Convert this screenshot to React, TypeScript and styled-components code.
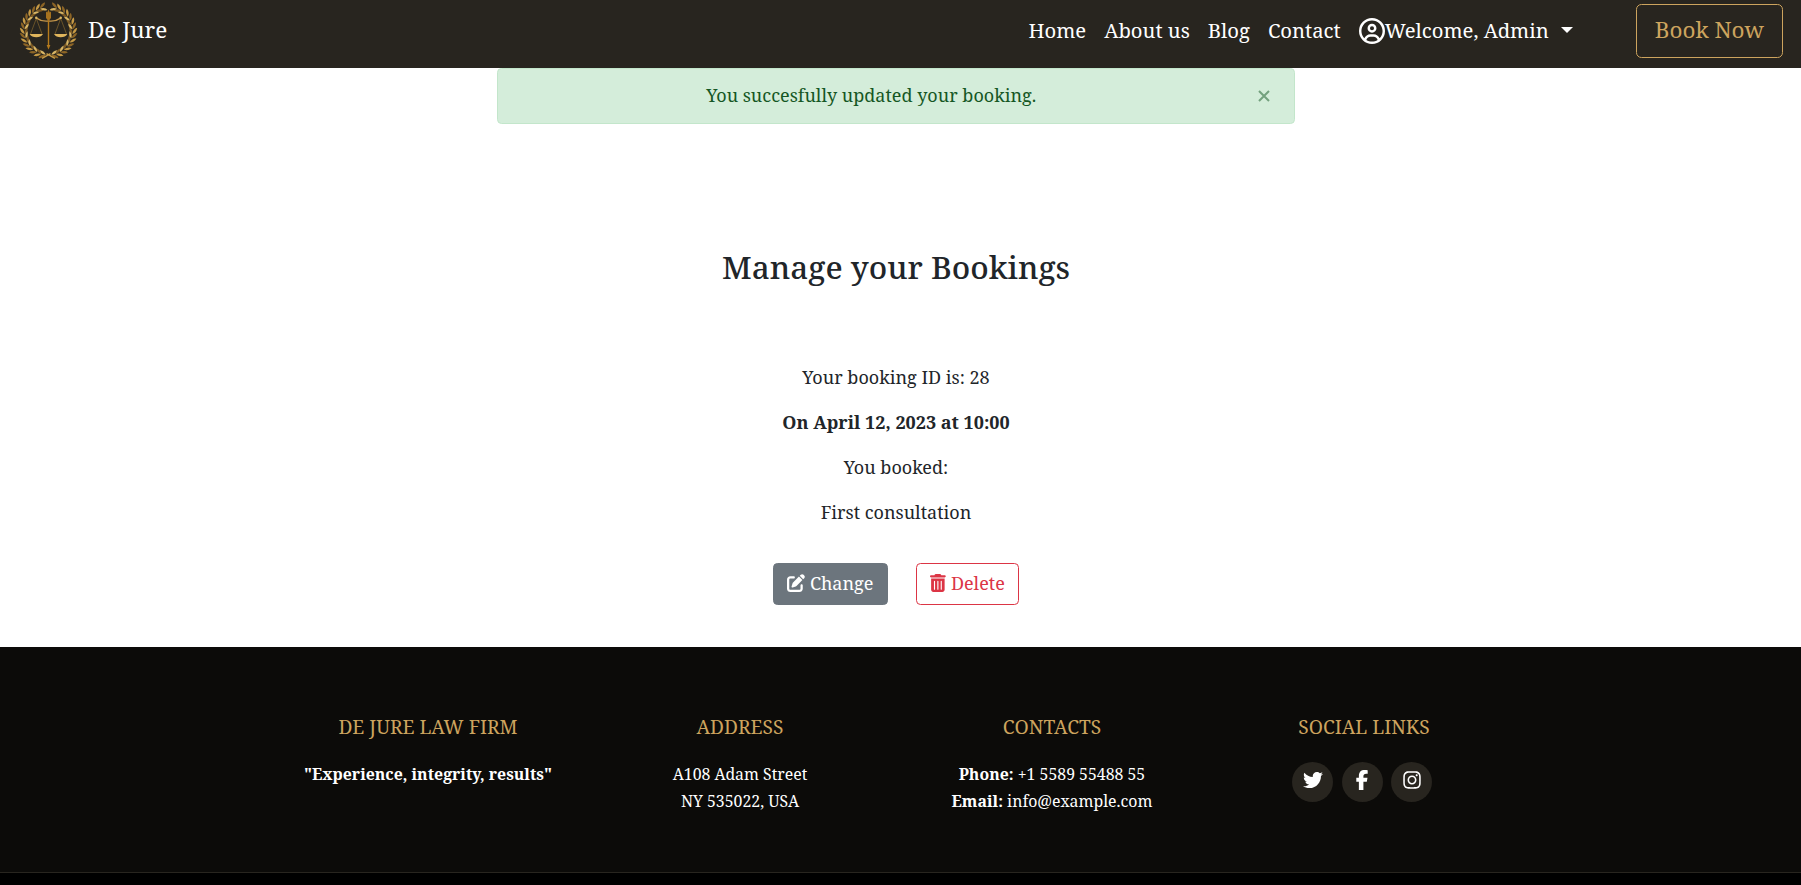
import React from "react";
import styled, { createGlobalStyle } from "styled-components";
import {
  FaPenToSquare,
  FaTrashCan,
  FaRegCircleUser,
  FaTwitter,
  FaFacebookF,
  FaInstagram,
} from "react-icons/fa6";

const GlobalStyle = createGlobalStyle`
  *, *::before, *::after { box-sizing: border-box; }
  html { font-size: 18px; }
  body {
    margin: 0;
    background: #fff;
    color: #212529;
    font-family: "Noto Serif", "Liberation Serif", serif;
    line-height: 1.5;
    overflow: hidden;
  }
`;

const Page = styled.div`
  display: flex;
  flex-direction: column;
  height: 885px;
  overflow: hidden;
`;

const Navbar = styled.header`
  flex: none;
  display: flex;
  align-items: flex-start;
  justify-content: space-between;
  height: 68px;
  padding: 0 1rem;
  background: #28251f;
`;

const Brand = styled.a`
  display: flex;
  align-items: flex-start;
  gap: 10px;
  padding-top: 1px;
  color: #fff;
  font-size: 1.25rem;
  line-height: 58px;
  text-decoration: none;
`;

const LogoMark = styled.svg`
  display: block;
  width: 60px;
  height: 60px;
`;

const Menu = styled.nav`
  display: flex;
  align-items: flex-start;
  padding-top: 4px;
`;

const MenuLink = styled.a`
  display: flex;
  align-items: center;
  height: 51px;
  padding: 0 0.5rem;
  color: #fff;
  font-size: 20.25px;
  line-height: 30px;
  white-space: pre;
  text-decoration: none;

  svg {
    width: 26px;
    height: 26px;
    margin-top: 2px;
  }
`;

const Caret = styled.span`
  margin-left: 12px;
  margin-top: 1px;
  border-top: 6px solid;
  border-left: 6px solid transparent;
  border-right: 6px solid transparent;
`;

const BookButton = styled.button`
  height: 54px;
  margin-left: 54px;
  padding: 0 1rem 2px;
  border: 1px solid #cda45e;
  border-radius: 5.4px;
  background: transparent;
  color: #cda45e;
  font: inherit;
  font-size: 1.25rem;
`;

const Main = styled.main`
  flex: none;
  display: flex;
  flex-direction: column;
  align-items: center;
  height: 579px;
  padding-right: 9px;
`;

const Alert = styled.div`
  display: flex;
  align-items: center;
  width: 798px;
  height: 56px;
  padding-left: 1.25rem;
  border: 1px solid #c3e6cb;
  border-radius: 4.5px;
  background: #d4edda;
  color: #155724;
`;

const AlertText = styled.span`
  flex: 1;
  margin-top: -1px;
  text-align: center;
`;

const CloseButton = styled.button`
  width: 72px;
  padding: 0;
  border: 0;
  background: none;
  color: inherit;
  opacity: 0.5;

  svg {
    display: block;
    width: 12px;
    height: 12px;
    margin-left: 36px;
  }
`;

const Title = styled.h3`
  margin: 124px 0 78px;
  font-size: 1.75rem;
  font-weight: 500;
  line-height: 38px;
`;

const Detail = styled.p<{ $strong?: boolean }>`
  margin: 0 0 1rem;
  font-weight: ${(p) => (p.$strong ? 700 : 400)};
`;

const Actions = styled.div`
  display: flex;
  gap: 28px;
  margin-top: 19px;
`;

const ActionButton = styled.button<{ $color: string; $filled?: boolean }>`
  display: flex;
  align-items: center;
  gap: 4.7px;
  height: 42px;
  padding: 0 0.75rem;
  border: 1px solid ${(p) => p.$color};
  border-radius: 4.5px;
  background: ${(p) => (p.$filled ? p.$color : "transparent")};
  color: ${(p) => (p.$filled ? "#fff" : p.$color)};
  font: inherit;

  svg {
    width: ${(p) => (p.$filled ? "18px" : "15.75px")};
    height: 18px;
    margin-top: -3px;
  }
  span {
    margin-top: -2px;
  }
`;

const Footer = styled.footer`
  flex: 1;
  background: #000;
  color: #fff;
  font-size: 15.85px;
  line-height: 27px;
`;

const FooterTop = styled.div`
  display: grid;
  grid-template-columns: repeat(4, 312px);
  justify-content: center;
  height: 226px;
  padding: 68px 9px 0 0;
  border-bottom: 1px solid #28251f;
  background: #0c0b09;
  text-align: center;
`;

const FooterTitle = styled.h4`
  margin: 0 0 23px;
  color: #cda45e;
  font-size: 19.2px;
  font-weight: 400;
  line-height: 23px;
  text-transform: uppercase;
`;

const FooterLine = styled.div``;

const Socials = styled.div`
  display: flex;
  justify-content: center;
  gap: 8.5px;
  margin-top: 24px;
  padding-right: 4px;
`;

const SocialLink = styled.a`
  display: flex;
  justify-content: center;
  width: 41px;
  height: 40px;
  padding-top: 8px;
  border-radius: 50%;
  background: #28251f;
  color: #fff;

  svg {
    width: 20px;
    height: 20px;
  }
`;

const LEAVES = Array.from({ length: 15 }, (_, i) => i);

function Branch() {
  return (
    <g>
      {LEAVES.map((i) => {
        const deg = 98 + i * 10.9;
        const rad = (deg * Math.PI) / 180;
        const x = 48.5 + 24 * Math.cos(rad);
        const y = 31 + 24 * Math.sin(rad);
        return (
          <g key={i} transform={`translate(${x} ${y}) rotate(${deg + 90})`}>
            <path d="M-0.5 0 Q1 -4 6.2 -4.2 Q5 -0.4 -0.5 0Z" fill={i % 2 ? "#c69a45" : "#8d6526"} />
            <path d="M-0.5 0 Q1 3.8 6 3.8 Q5 0.4 -0.5 0Z" fill={i % 2 ? "#7d5a24" : "#d9b665"} />
          </g>
        );
      })}
    </g>
  );
}

function Logo() {
  return (
    <LogoMark viewBox="18 1 60 60" aria-hidden="true">
      <Branch />
      <g transform="translate(97 0) scale(-1 1)">
        <Branch />
      </g>
      <path d="M42 58.4 L50.5 53.6 M55 58.4 L46.5 53.6" fill="none" stroke="#c69a45" strokeWidth="1.5" />
      <path
        d="M36.3 18.5 L30.5 34 M36.3 18.5 L42 34 M60.7 18.5 L55 34 M60.7 18.5 L66.5 34"
        fill="none"
        stroke="#94702f"
        strokeWidth="0.6"
      />
      <path d="M35.5 17.6 Q42 22 48.5 21 Q55 22 61.5 17.6" fill="none" stroke="#c4964a" strokeWidth="1.3" />
      <circle cx="36.3" cy="17.8" r="1.2" fill="#d9b665" />
      <circle cx="60.7" cy="17.8" r="1.2" fill="#d9b665" />
      <path
        d="M29.6 34 H43 Q41 37.2 36.3 37.2 Q31.6 37.2 29.6 34Z M54 34 H67.4 Q65.4 37.2 60.7 37.2 Q56 37.2 54 34Z"
        fill="#e0b55c"
      />
      <path d="M47.8 14 H49.2 V45 H50.4 L48.5 49.5 L46.6 45 H47.8Z" fill="#b57a1c" />
      <path d="M46 11.5 L47.2 12.5 L48.5 9.6 L49.8 12.5 L51 11.5 V18 L48.5 21 L46 18Z" fill="#a8731f" />
    </LogoMark>
  );
}

export default function App() {
  return (
    <Page>
      <GlobalStyle />
      <Navbar>
        <Brand>
          <Logo />
          De Jure
        </Brand>
        <Menu>
          <MenuLink>Home</MenuLink>
          <MenuLink>About us</MenuLink>
          <MenuLink>Blog</MenuLink>
          <MenuLink>Contact</MenuLink>
          <MenuLink>
            <FaRegCircleUser />
            Welcome, Admin
            <Caret />
          </MenuLink>
          <BookButton>Book Now</BookButton>
        </Menu>
      </Navbar>

      <Main>
        <Alert role="alert">
          <AlertText>You succesfully updated your booking.</AlertText>
          <CloseButton aria-label="Close">
            <svg viewBox="0 0 12 12" fill="none" stroke="currentColor" strokeWidth="2">
              <path d="M1 1 L11 11 M11 1 L1 11" />
            </svg>
          </CloseButton>
        </Alert>
        <Title>Manage your Bookings</Title>
        <Detail>Your booking ID is: 28</Detail>
        <Detail $strong>On April 12, 2023 at 10:00</Detail>
        <Detail>You booked:</Detail>
        <Detail>First consultation</Detail>
        <Actions>
          <ActionButton $color="#6c757d" $filled>
            <FaPenToSquare />
            <span>Change</span>
          </ActionButton>
          <ActionButton $color="#dc3545">
            <FaTrashCan />
            <span>Delete</span>
          </ActionButton>
        </Actions>
      </Main>

      <Footer>
        <FooterTop>
          <section>
            <FooterTitle>De Jure Law Firm</FooterTitle>
            <FooterLine>
              <strong>"Experience, integrity, results"</strong>
            </FooterLine>
          </section>
          <section>
            <FooterTitle>Address</FooterTitle>
            <FooterLine>A108 Adam Street</FooterLine>
            <FooterLine>NY 535022, USA</FooterLine>
          </section>
          <section>
            <FooterTitle>Contacts</FooterTitle>
            <FooterLine>
              <strong>Phone:</strong> +1 5589 55488 55
            </FooterLine>
            <FooterLine>
              <strong>Email:</strong> info@example.com
            </FooterLine>
          </section>
          <section>
            <FooterTitle>Social Links</FooterTitle>
            <Socials>
              <SocialLink aria-label="Twitter">
                <FaTwitter />
              </SocialLink>
              <SocialLink aria-label="Facebook">
                <FaFacebookF />
              </SocialLink>
              <SocialLink aria-label="Instagram">
                <FaInstagram />
              </SocialLink>
            </Socials>
          </section>
        </FooterTop>
      </Footer>
    </Page>
  );
}
